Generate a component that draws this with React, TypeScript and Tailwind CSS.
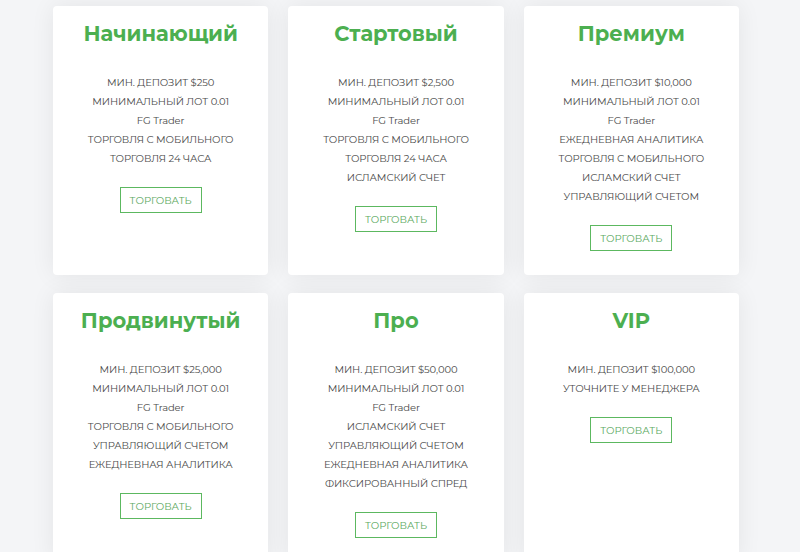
const plans = [
  {
    title: "Начинающий",
    items: ["МИН. ДЕПОЗИТ $250", "МИНИМАЛЬНЫЙ ЛОТ 0.01", "FG Trader", "ТОРГОВЛЯ С МОБИЛЬНОГО", "ТОРГОВЛЯ 24 ЧАСА"],
  },
  {
    title: "Стартовый",
    items: ["МИН. ДЕПОЗИТ $2,500", "МИНИМАЛЬНЫЙ ЛОТ 0.01", "FG Trader", "ТОРГОВЛЯ С МОБИЛЬНОГО", "ТОРГОВЛЯ 24 ЧАСА", "ИСЛАМСКИЙ СЧЕТ"],
  },
  {
    title: "Премиум",
    items: [
      "МИН. ДЕПОЗИТ $10,000",
      "МИНИМАЛЬНЫЙ ЛОТ 0.01",
      "FG Trader",
      "ЕЖЕДНЕВНАЯ АНАЛИТИКА",
      "ТОРГОВЛЯ С МОБИЛЬНОГО",
      "ИСЛАМСКИЙ СЧЕТ",
      "УПРАВЛЯЮЩИЙ СЧЕТОМ",
    ],
  },
  {
    title: "Продвинутый",
    items: [
      "МИН. ДЕПОЗИТ $25,000",
      "МИНИМАЛЬНЫЙ ЛОТ 0.01",
      "FG Trader",
      "ТОРГОВЛЯ С МОБИЛЬНОГО",
      "УПРАВЛЯЮЩИЙ СЧЕТОМ",
      "ЕЖЕДНЕВНАЯ АНАЛИТИКА",
    ],
  },
  {
    title: "Про",
    items: [
      "МИН. ДЕПОЗИТ $50,000",
      "МИНИМАЛЬНЫЙ ЛОТ 0.01",
      "FG Trader",
      "ИСЛАМСКИЙ СЧЕТ",
      "УПРАВЛЯЮЩИЙ СЧЕТОМ",
      "ЕЖЕДНЕВНАЯ АНАЛИТИКА",
      "ФИКСИРОВАННЫЙ СПРЕД",
    ],
  },
  {
    title: "VIP",
    items: ["МИН. ДЕПОЗИТ $100,000", "УТОЧНИТЕ У МЕНЕДЖЕРА"],
  },
];

function PlanCard({ title, items }: { title: string; items: string[] }) {
  return (
    <div className="bg-white rounded-[4px] shadow-[0_0_24px_rgba(0,0,0,0.07)] pt-[13px] pb-[24px] px-2 flex flex-col items-center text-center">
      <h3 className="text-[21px] leading-[30px] font-bold text-[#4caf50]">{title}</h3>
      <ul className="mt-6 text-[10px] leading-[19px] text-[#4a4a4a] tracking-[-0.1px]">
        {items.map((item) => (
          <li key={item}>{item}</li>
        ))}
      </ul>
      <button className="mt-[19px] w-[82px] h-[26px] border border-[#5cb860] text-[#5aa85e] text-[10px]">
        ТОРГОВАТЬ
      </button>
    </div>
  );
}

export default function App() {
  return (
    <div className="min-h-[552px] bg-[#f4f5f7] pt-[6px] pl-[53px] font-['Montserrat','Noto_Sans',sans-serif]">
      <div className="w-[686px] grid grid-cols-3 gap-x-[20px] gap-y-[18px]">
        {plans.map((p) => (
          <PlanCard key={p.title} title={p.title} items={p.items} />
        ))}
      </div>
    </div>
  );
}
